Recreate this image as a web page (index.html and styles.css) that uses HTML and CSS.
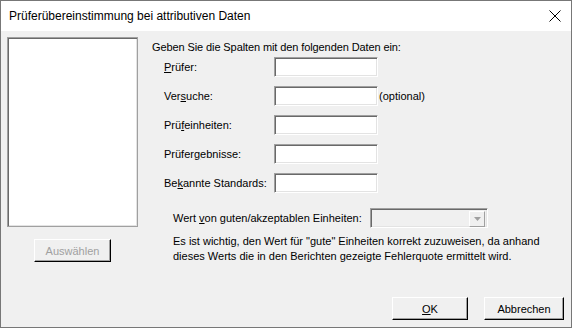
FILE: index.html
```html
<!DOCTYPE html>
<html lang="de">
<head>
<meta charset="utf-8">
<title>Prüferübereinstimmung bei attributiven Daten</title>
<link rel="stylesheet" href="styles.css">
</head>
<body>
<div class="window">
  <div class="titlebar">
    <span class="title">Prüferübereinstimmung bei attributiven Daten</span>
    <svg class="close" width="12" height="12" viewBox="0 0 12 12"><path d="M0.5 0.5 L11.5 11.5 M11.5 0.5 L0.5 11.5" stroke="#000" stroke-width="1" fill="none"/></svg>
  </div>
  <div class="body">
    <div class="main">
      <div class="left">
        <div class="listbox sunken"></div>
        <button class="btn btn-select" disabled>Auswählen</button>
      </div>
      <div class="right">
        <div class="intro">Geben Sie die Spalten mit den folgenden Daten ein:</div>
        <div class="fields">
          <label class="lbl"><u>P</u>rüfer:</label><div class="field sunken"></div><span></span>
          <label class="lbl">Ver<u>s</u>uche:</label><div class="field sunken"></div><span class="opt">(optional)</span>
          <label class="lbl">Prü<u>f</u>einheiten:</label><div class="field sunken"></div><span></span>
          <label class="lbl">Prüfer<u>g</u>ebnisse:</label><div class="field sunken"></div><span></span>
          <label class="lbl">Be<u>k</u>annte Standards:</label><div class="field sunken"></div><span></span>
        </div>
        <div class="wert-row">
          <label class="wert-lbl">Wert <u>v</u>on guten/akzeptablen Einheiten:</label>
          <div class="combo sunken">
            <div class="combo-btn"><svg width="7" height="4" viewBox="0 0 7 4"><path d="M0 0 H7 L3.5 4 Z" fill="#a0a0a0"/></svg></div>
          </div>
        </div>
        <p class="note">Es ist wichtig, den Wert für "gute" Einheiten korrekt zuzuweisen, da anhand dieses Werts die in den Berichten gezeigte Fehlerquote ermittelt wird.</p>
      </div>
    </div>
    <div class="footer">
      <button class="btn btn-ok"><u>O</u>K</button>
      <button class="btn btn-cancel">Abbrechen</button>
    </div>
  </div>
</div>
</body>
</html>
```
FILE: styles.css
```css
* { box-sizing: border-box; }
html, body { margin: 0; padding: 0; background: #fff; }
body {
  font-family: "Liberation Sans", Arial, sans-serif;
  font-size: 11px;
  color: #000;
}
.window {
  width: 572px;
  height: 328px;
  border: 1px solid #777;
  display: flex;
  flex-direction: column;
  background: #f0f0f0;
}
.titlebar {
  height: 30px;
  flex: none;
  background: #fff;
  display: flex;
  align-items: center;
  padding-left: 8px;
  padding-right: 10px;
}
.title {
  font-family: "Liberation Sans", Arial, sans-serif;
  font-size: 12px;
  flex: 1;
}
.close { flex: none; }
.body {
  flex: 1;
  display: flex;
  flex-direction: column;
  background: #f0f0f0;
}
.main {
  display: flex;
  padding: 6px 0 0 6px;
}
.left {
  width: 131px;
  display: flex;
  flex-direction: column;
  align-items: center;
}
.sunken {
  border-style: solid;
  border-width: 1px;
  border-color: #a0a0a0 #fff #fff #a0a0a0;
  box-shadow: inset 1px 1px 0 #696969, inset -1px -1px 0 #e3e3e3;
  background: #fff;
}
.listbox {
  width: 131px;
  height: 190px;
  border-color: #a0a0a0;
}
.btn {
  font-family: "Liberation Sans", Arial, sans-serif;
  font-size: 11px;
  height: 23px;
  padding: 0;
  background: #f0f0f0;
  border-style: solid;
  border-width: 1px;
  border-color: #fff #000 #000 #fff;
  box-shadow: inset -1px -1px 0 #a0a0a0;
  color: #000;
}
.btn-select {
  width: 77px;
  margin-top: 12px;
  color: #a0a0a0;
}
.right {
  margin-left: 14px;
  padding-top: 2px;
}
.intro {
  line-height: 16px;
  letter-spacing: -0.1px;
}
.fields {
  margin-top: 2px;
  margin-left: 12px;
  display: grid;
  grid-template-columns: 110px 104px auto;
  grid-auto-rows: 20px;
  row-gap: 9px;
  align-items: center;
}
.field {
  height: 20px;
}
.opt { padding-left: 1px; }
.wert-row {
  margin-top: 15px;
  margin-left: 21px;
  display: flex;
  align-items: center;
  height: 20px;
}
.wert-lbl { width: 197px; }
.combo {
  width: 118px;
  height: 20px;
  background: #f0f0f0;
  display: flex;
  justify-content: flex-end;
  padding: 1px;
}
.combo-btn {
  width: 16px;
  height: 16px;
  margin: 1px 1px 0 0;
  display: flex;
  align-items: center;
  justify-content: center;
  background: #f0f0f0;
  border-style: solid;
  border-width: 1px;
  border-color: #fff #a0a0a0 #a0a0a0 #fff;
}
.note {
  margin: 6px 0 0 21px;
  line-height: 15px;
  width: 370px;
}
.footer {
  margin-top: auto;
  display: flex;
  justify-content: flex-end;
  gap: 16px;
  padding: 0 7px 7px 0;
}
.btn-ok { width: 76px; }
.btn-cancel { width: 80px; }
```
